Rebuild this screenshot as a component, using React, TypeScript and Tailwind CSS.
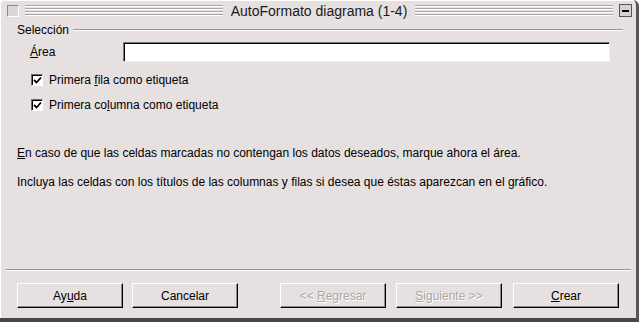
import React from "react";

const font = { fontFamily: '"Liberation Sans", Arial, sans-serif' };

function Stripes() {
  return (
    <div className="flex-1 flex flex-col gap-[1px] mx-[6px]">
      {[0, 1, 2, 3].map((i) => (
        <div key={i} className="h-[2px] border-t border-[#a9a5a5] border-b border-b-white" />
      ))}
    </div>
  );
}

function Check() {
  return (
    <div className="w-[12px] h-[12px] bg-white border border-t-[#6f6b6b] border-l-[#6f6b6b] border-r-white border-b-white flex items-center justify-center shadow-[inset_1px_1px_0_#000]">
      <svg width="9" height="9" viewBox="0 0 9 9">
        <path d="M1 4 L3.5 6.5 L8 1.5" stroke="#000" strokeWidth="1.8" fill="none" />
      </svg>
    </div>
  );
}

function Btn({ children, disabled }: { children: React.ReactNode; disabled?: boolean }) {
  return (
    <div
      className={
        "w-[106px] h-[25px] flex items-center justify-center text-[12px] border border-t-white border-l-white border-r-[#000] border-b-[#000] shadow-[inset_-1px_-1px_0_#8e8a8a] " +
        (disabled ? "text-[#aba6a6] [text-shadow:1px_1px_0_#ffffff]" : "text-black")
      }
    >
      <span>{children}</span>
    </div>
  );
}

export default function App() {
  return (
    <div style={font} className="w-[639px] h-[322px] bg-[#e6e0e0] flex flex-col border-r-[3px] border-b-[4px] border-r-[#5a5656] border-b-[#4a4646] rounded-tl-[6px] rounded-tr-[6px] overflow-hidden text-black">
      {/* title bar */}
      <div className="h-[20px] flex items-center pl-[6px] pr-[4px] border-t border-l border-white">
        <div className="w-[12px] h-[12px] border border-t-[#8c8888] border-l-[#8c8888] border-r-white border-b-white bg-[#dcd6d6]" />
        <Stripes />
        <div className="text-[14px] leading-[16px] text-[#1a1a1a] px-[2px]">AutoFormato diagrama (1-4)</div>
        <Stripes />
        <div className="w-[13px] h-[13px] border border-[#555] bg-[#d8d2d2] flex items-center justify-center">
          <div className="w-[7px] h-[2px] bg-black" />
        </div>
      </div>

      <div className="flex flex-col flex-1 border-l border-white">
        {/* Selección header */}
        <div className="flex items-center pl-[16px] pr-[13px] mt-[3px] h-[14px]">
          <span className="text-[12px] leading-[14px]">Selección</span>
          <div className="flex-1 ml-[4px] border-t border-[#999494] border-b border-b-white" />
        </div>

        {/* Área */}
        <div className="flex items-center mt-[5px] pl-[29px]">
          <span className="text-[12px] w-[93px]">
            <span className="underline">Á</span>rea
          </span>
          <div className="w-[487px] h-[20px] bg-white border border-t-[#777] border-l-[#777] border-r-[#f4f0f0] border-b-[#f4f0f0] shadow-[inset_1px_1px_0_#000]" />
        </div>

        {/* checkboxes */}
        <div className="flex items-center mt-[11px] pl-[30px] gap-[6px] h-[14px]">
          <Check />
          <span className="text-[12px]">
            Primera <span className="underline">f</span>ila como etiqueta
          </span>
        </div>
        <div className="flex items-center mt-[11px] pl-[30px] gap-[6px] h-[14px]">
          <Check />
          <span className="text-[12px]">
            Primera co<span className="underline">l</span>umna como etiqueta
          </span>
        </div>

        {/* paragraphs */}
        <div className="mt-[34px] pl-[16px] text-[12px] leading-[14px]">
          <span className="underline">E</span>n caso de que las celdas marcadas no contengan los datos deseados, marque ahora el área.
        </div>
        <div className="mt-[15px] pl-[16px] text-[12px] leading-[14px]">
          Incluya las celdas con los títulos de las columnas y filas si desea que éstas aparezcan en el gráfico.
        </div>

        <div className="flex-1" />

        {/* separator */}
        <div className="mx-[5px] border-t border-[#999494] border-b border-b-white" />

        {/* buttons */}
        <div className="flex items-center mt-[12px] mb-[10px] pl-[16px] relative">
          <Btn>
            Ay<span className="underline">u</span>da
          </Btn>
          <div className="ml-[9px]">
            <Btn>Cancelar</Btn>
          </div>
          <div className="ml-[42px]">
            <Btn disabled>
              &lt;&lt; <span className="underline">R</span>egresar
            </Btn>
          </div>
          <div className="ml-[10px]">
            <Btn disabled>
              <span className="underline">S</span>iguiente &gt;&gt;
            </Btn>
          </div>
          <div className="ml-[11px]">
            <Btn>
              <span className="underline">C</span>rear
            </Btn>
          </div>
        </div>
      </div>
    </div>
  );
}
